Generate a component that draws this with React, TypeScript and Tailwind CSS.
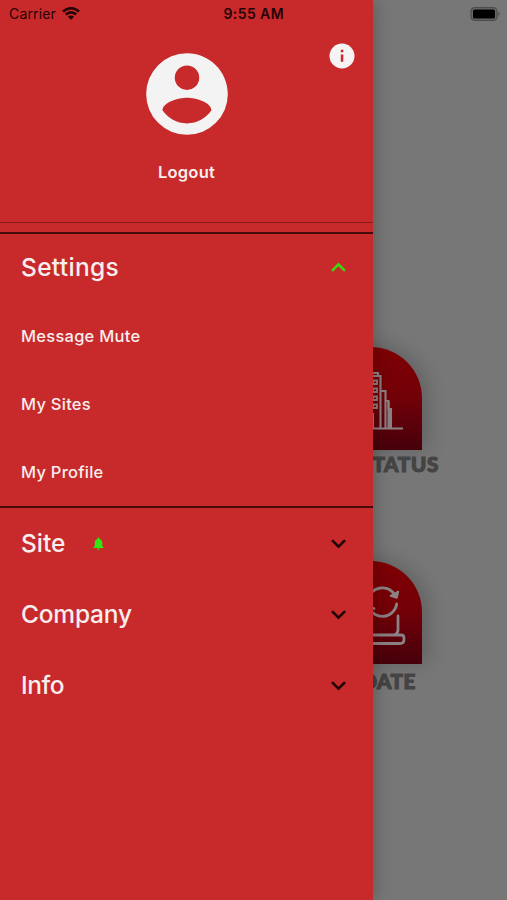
import React from "react";

const Chevron = ({ up = false }: { up?: boolean }) => (
  <svg
    viewBox="0 0 24 24"
    className={up ? "size-[29px] rotate-180 text-[#35e010]" : "size-[29px] text-[#1c0303]"}
    fill="currentColor"
    stroke="currentColor"
    strokeWidth="0.2"
  >
    <path d="M16.59 8.59 12 13.17 7.41 8.59 6 10l6 6 6-6z" />
  </svg>
);

type SectionProps = { title: string; titleClass: string; open?: boolean; bell?: boolean };

const Section = ({ title, titleClass, open, bell }: SectionProps) => (
  <div className={`flex items-center pr-5 pl-[21px] ${open ? "h-[67px]" : "h-[71px]"}`}>
    <span className={`text-[24.5px] font-medium ${titleClass}`}>{title}</span>
    {bell && (
      <svg viewBox="0 0 24 24" className="ml-[25px] size-[15px] text-[#2ee810]" fill="currentColor">
        <path d="M12 22c1.1 0 2-.9 2-2h-4a2 2 0 0 0 2 2zm6-6v-5c0-3.07-1.64-5.64-4.5-6.32V4a1.5 1.5 0 0 0-3 0v.68C7.63 5.36 6 7.92 6 11v5l-2 2v1h16v-1l-2-2z" />
      </svg>
    )}
    <span className="ml-auto">
      <Chevron up={open} />
    </span>
  </div>
);

const Item = ({ label }: { label: string }) => (
  <div className="flex h-[68.3px] items-center pt-[1.6px] pl-[21px] text-[16.5px] font-medium tracking-[0.25px]">
    {label}
  </div>
);

const tile =
  "h-[103px] w-[102px] overflow-hidden rounded-t-[51px] bg-gradient-to-b from-[#7e0004] via-[#720007] to-[#46000a] shadow-[5px_-1px_20px_rgba(0,0,0,0.2)]";

const caption =
  "font-[Lato,sans-serif] text-[20.5px] leading-6 font-black whitespace-nowrap text-[#444444] [-webkit-text-stroke:1.2px_#444444]";

const Buildings = () => (
  <svg viewBox="0 0 102 103" className="h-[103px] w-[102px]" fill="none" stroke="#8c8183" strokeWidth="2.1">
    <path d="M36 81.5V29h24.5v52.5M40 29v-3h18v3M60.5 44h5v37.5M65.5 54h3v27.5M20 81.5h63" />
    <path d="M68.5 54.5V62h2.5v19.5" />
    <path d="M70 62v19" strokeWidth="2.8" />
    <path
      d="M53 33.5h4v3.5h-4zM53 41.5h4v3.5h-4zM53 49.5h4v3.5h-4zM53 57.5h4v3.5h-4zM45 33.5h4v3.5h-4zM45 41.5h4v3.5h-4zM45 49.5h4v3.5h-4zM45 57.5h4v3.5h-4z"
      strokeWidth="1.8"
    />
    <path d="M47 81V67h6v14" />
  </svg>
);

const LaptopSync = () => (
  <svg
    viewBox="0 0 102 103"
    className="h-[103px] w-[102px]"
    fill="none"
    stroke="#8c8183"
    strokeWidth="2.8"
    strokeLinecap="round"
    strokeLinejoin="round"
  >
    <path d="M48.5 37A14.5 14.5 0 0 1 74.5 33.5M76.7 43A14.5 14.5 0 0 1 49 46.5M48 51l1-5 5 1.5" />
    <path d="m70.5 34.8 6.3 2 1.5-6.2z" fill="#8c8183" strokeWidth="1.8" />
    <path d="M26 55v19M78 55v14q0 3.500-3.500 5M22 74h59q3 0 3 3v1.500q0 4-4 4H22q-4 0-4-4.300t4-4.200z" />
  </svg>
);

export default function App() {
  return (
    <div className="relative flex h-[900px] w-[507px] overflow-hidden bg-[#777777] font-[Inter,sans-serif] text-[#f8eeee]">
      <aside className="z-10 flex w-[373px] shrink-0 flex-col bg-[#c8292b] shadow-[0_0_18px_rgba(0,0,0,0.28)]">
        <header className="flex h-[223px] flex-col items-center border-b border-[#851b1b] pt-[45px]">
          <svg viewBox="0 0 24 24" className="size-[98px]" fill="#f3f3f3">
            <path d="M12,19.2C9.5,19.2 7.29,17.92 6,16C6.03,14 10,12.9 12,12.9C14,12.9 17.97,14 18,16C16.71,17.92 14.5,19.2 12,19.2M12,5A3,3 0 0,1 15,8A3,3 0 0,1 12,11A3,3 0 0,1 9,8A3,3 0 0,1 12,5M12,2A10,10 0 0,0 2,12A10,10 0 0,0 12,22A10,10 0 0,0 22,12C22,6.47 17.5,2 12,2Z" />
          </svg>
          <span className="mt-[17px] text-[16.5px] leading-6 font-semibold tracking-[0.25px]">Logout</span>
        </header>
        <section className="mt-[9px] border-y-2 border-[#470b0c]">
          <Section title="Settings" titleClass="tracking-[0.3px]" open />
          <Item label="Message Mute" />
          <Item label="My Sites" />
          <Item label="My Profile" />
        </section>
        <Section title="Site" titleClass="tracking-[0px]" bell />
        <Section title="Company" titleClass="tracking-[-0.2px]" />
        <Section title="Info" titleClass="tracking-[-0.4px]" />
      </aside>

      <main className="flex min-w-0 flex-1 flex-col pt-[347px]">
        <div className="-ml-[73px] flex w-[142px] flex-col items-center">
          <div className={tile}>
            <Buildings />
          </div>
          <span className={`mt-[2px] ml-[7px] tracking-[0.8px] ${caption}`}>SITE STATUS</span>
        </div>
        <div className="mt-[85px] -ml-[73px] flex w-[142px] flex-col items-center">
          <div className={tile}>
            <LaptopSync />
          </div>
          <span className={`mt-[5px] ml-[6px] tracking-[0.5px] ${caption}`}>UPDATE</span>
        </div>
      </main>

      <div className="absolute inset-x-0 top-0 z-20 flex h-[27px] items-center text-[#260304]">
        <span className="ml-[9px] text-[14px] tracking-[0.15px]">Carrier</span>
        <svg viewBox="0 0 18 13" className="ml-[6px] h-[13px] w-[18px]" fill="none" stroke="currentColor" strokeWidth="2.6">
          <path d="M1 4.6Q9-2.2 17 4.6M3.8 7.6Q9 3.2 14.2 7.6" />
          <path d="M9 12.8 5.9 9.7Q9 7.4 12.1 9.7z" fill="currentColor" stroke="none" />
        </svg>
        <span className="absolute left-[223.5px] text-[14px] font-semibold tracking-[0.4px]">9:55 AM</span>
        <svg viewBox="0 0 32 14" className="mr-[5px] ml-auto h-[14px] w-[32px]">
          <rect x="1" y="0.7" width="26" height="12.6" rx="3.6" fill="#696969" stroke="#4c4c4c" strokeWidth="1.2" />
          <rect x="3" y="2.5" width="22" height="9" rx="1.5" fill="#000" />
          <path d="M28.5 4.8q2.4 2.2 0 4.4z" fill="#484848" />
        </svg>
      </div>
      <svg viewBox="0 0 26 26" className="absolute top-[43px] left-[329px] z-20 size-[26px]">
        <circle cx="13" cy="13" r="12.5" fill="#f5f3f3" />
        <path d="M11.8 6.8h2.5v2.4h-2.5zM11.8 11.5h2.5v7.3h-2.5z" fill="#c8292b" />
      </svg>
    </div>
  );
}
